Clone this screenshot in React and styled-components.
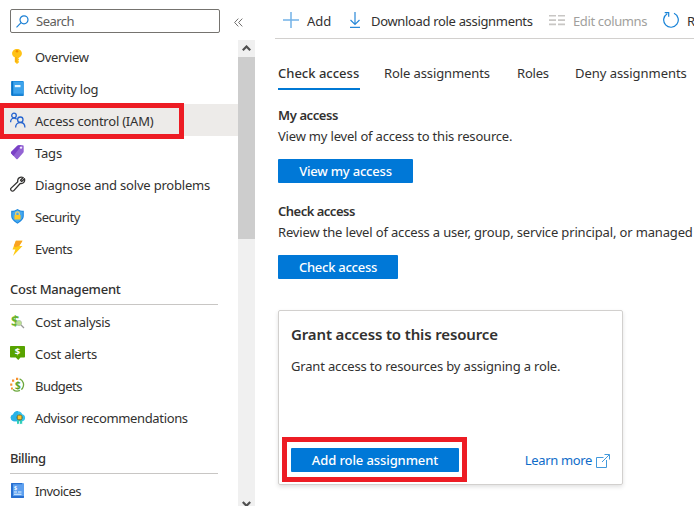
import React from "react";
import styled, { createGlobalStyle, css } from "styled-components";

const GlobalStyle = createGlobalStyle`
  * { box-sizing: border-box; }
  html, body { margin: 0; padding: 0; background: #fff; }
  body {
    width: 694px;
    height: 506px;
    overflow: hidden;
    font-family: "Noto Sans", "Open Sans", sans-serif;
    font-size: 13px;
    color: #323130;
  }
  h2, h3, p { margin: 0; }
`;

const Text = styled.span`
  white-space: nowrap;
  letter-spacing: ${(p) => p.$spacing || 0}px;
`;

const Page = styled.div`
  display: flex;
  width: 694px;
  height: 506px;
  overflow: hidden;
`;

const Sidebar = styled.aside`
  flex: none;
  width: 255px;
  height: 506px;
  display: flex;
  flex-direction: column;
`;

const SearchRow = styled.div`
  flex: none;
  height: 40px;
  padding: 9px 11px 0 10px;
  display: flex;
  align-items: flex-start;
  justify-content: space-between;
`;

const SearchBox = styled.div`
  width: 210px;
  height: 24px;
  border: 1px solid #75736f;
  border-radius: 2px;
  display: flex;
  align-items: center;
  gap: 7px;
  padding: 0 5px;
  color: #605e5c;
`;

const Collapse = styled.div`
  width: 10px;
  height: 26px;
  display: flex;
  align-items: center;
`;

const SidebarBody = styled.div`
  display: flex;
  flex: 1;
  min-height: 0;
`;

const Menu = styled.nav`
  width: 238px;
  overflow: hidden;
`;

const MenuRow = styled.div`
  position: relative;
  height: 32px;
  display: flex;
  align-items: center;
  gap: 9px;
  padding: 2px 0 0 10px;
  background: ${(p) => (p.$selected ? "#edebe9" : "transparent")};
  svg { flex: none; margin-top: -2px; }
`;

const MenuHeading = styled.h3`
  height: 41px;
  width: 208px;
  margin-left: 10px;
  padding-top: 15px;
  border-bottom: 1px solid #c8c6c4;
  font-size: 13px;
  line-height: 20px;
  font-weight: 550;
`;

const ScrollBar = styled.div`
  width: 17px;
  background: #f0f0f0;
  display: flex;
  flex-direction: column;
  justify-content: space-between;
  overflow: hidden;
`;

const ScrollThumb = styled.div`
  height: 182px;
  background: #cdcdcd;
`;

const ScrollButton = styled.div`
  height: ${(p) => p.$height}px;
  display: flex;
  justify-content: center;
  svg { flex: none; margin-top: ${(p) => p.$offset}px; }
`;

const Highlight = styled.div`
  position: absolute;
  pointer-events: none;
  border: 5px solid #ed1c24;
  ${(p) =>
    p.$kind === "menu"
      ? css`left: -1px; top: -1px; width: 185px; height: 36px;`
      : css`left: -9px; top: -11px; width: 185px; height: 45px;`}
`;

const Main = styled.main`
  flex: 1;
  min-width: 0;
  padding-left: 20px;
  overflow: hidden;
`;

const Toolbar = styled.div`
  height: 39px;
  border-bottom: 1px solid #d2d0ce;
  display: flex;
  align-items: center;
  padding: 4px 0 0 8px;
  overflow: hidden;
`;

const Command = styled.div`
  flex: none;
  width: ${(p) => p.$width}px;
  display: flex;
  align-items: center;
  gap: ${(p) => p.$gap}px;
  color: ${(p) => (p.$disabled ? "#a19f9d" : "#323130")};
  svg { flex: none; margin-top: -2px; }
`;

const Content = styled.div`
  padding-left: 3px;
`;

const Tabs = styled.div`
  display: flex;
  height: 51px;
  padding-top: 24px;
  overflow: hidden;
`;

const Tab = styled.div`
  flex: none;
  height: 27px;
  line-height: 20px;
  margin-right: ${(p) => p.$after}px;
  width: ${(p) => p.$width}px;
  border-bottom: 2px solid ${(p) => (p.$active ? "#0078d4" : "transparent")};
  font-weight: ${(p) => (p.$active ? 500 : 400)};
`;

const Section = styled.section`
  height: 96px;
  padding-top: 15px;
`;

const SectionTitle = styled.h2`
  font-size: 13px;
  font-weight: 650;
  line-height: 20px;
`;

const Paragraph = styled.p`
  line-height: 20px;
  margin-top: 1px;
  white-space: nowrap;
`;

const PrimaryButton = styled.div`
  width: ${(p) => p.$width}px;
  height: 24px;
  border-radius: 1px;
  background: #0078d7;
  color: #fff;
  font-weight: 500;
  display: flex;
  align-items: center;
  justify-content: center;
`;

const SectionAction = styled.div`
  margin-top: 13px;
`;

const Card = styled.section`
  width: 345px;
  height: 175px;
  margin-top: 28px;
  border: 1px solid #d2d0ce;
  border-radius: 2px;
  box-shadow: 0 2px 4px rgba(0, 0, 0, 0.12);
  padding: 12px 12px 12px;
  display: flex;
  flex-direction: column;
`;

const CardTitle = styled.h2`
  font-size: 15px;
  line-height: 22px;
  font-weight: 600;
`;

const CardText = styled.p`
  margin-top: 11px;
  line-height: 20px;
`;

const CardFooter = styled.div`
  margin-top: auto;
  display: flex;
  align-items: center;
  justify-content: space-between;
`;

const HighlightAnchor = styled.div`
  position: relative;
`;

const Link = styled.div`
  display: flex;
  align-items: center;
  gap: 4px;
  color: #0f6cc9;
  svg { margin-top: 2px; }
`;

const SearchIcon = () => (
  <svg width="13" height="13" viewBox="0 0 13 13" fill="none" stroke="#1a7fd4" strokeWidth="1.2">
    <circle cx="8" cy="4.8" r="4" />
    <path d="M5.1 7.7 0.5 12.3" />
  </svg>
);

const CollapseIcon = () => (
  <svg width="9" height="9" viewBox="0 0 9 9" fill="none" stroke="#605e5c" strokeWidth="0.9">
    <path d="M4.3.6.6 4.500l3.700 3.900M8.300.6 4.600 4.500l3.700 3.900" />
  </svg>
);

const Chevron = ({ down }) => (
  <svg width="9" height="7" viewBox="0 0 9 7" fill="none" stroke="#505050" strokeWidth="2.2">
    <path d={down ? "M.8 1 4.5 4.8 8.2 1" : "M.8 5.2 4.5 1.5l3.7 3.7"} />
  </svg>
);

const Icon = ({ children }) => (
  <svg width="16" height="16" viewBox="0 0 16 16" fill="none">
    {children}
  </svg>
);

const KeyIcon = () => (
  <Icon>
    <path d="M7 1C4.200 1 2.100 2.900 2.100 5.400c0 1.700 1 3.100 2.700 3.900V14L7 15.900l2.200-2-1-1.200 1-1.200-1-1.100 1-.900c1.700-.9 2.700-2.400 2.700-4.100C11.900 2.900 9.800 1 7 1Z" fill="#ffc216" />
    <circle cx="7" cy="3.300" r="1.300" fill="#f08c00" />
    <path d="M6 9v5" stroke="#f3a20a" />
  </Icon>
);

const LogIcon = () => (
  <Icon>
    <rect x="1.300" y="1" width="12.500" height="14.700" rx="1" fill="#208ee0" />
    <path d="M3.500 2h9.700v11.500H3.500z" fill="#3da3ec" />
    <path d="M1.300 2v12.700c0 .6.4 1 1 1h10.500c.6 0 1-.4 1-1H3V1h-.7c-.6 0-1 .4-1 1Z" fill="#0874c7" />
    <path d="M4.800 5h5.700v2.200H4.800z" fill="#e9f7ff" />
  </Icon>
);

const PeopleIcon = () => (
  <Icon>
    <g stroke="#2564cf" strokeWidth="1.300">
      <circle cx="4" cy="3.500" r="2.300" />
      <circle cx="10.300" cy="7.700" r="2.700" />
      <path d="M.6 10.200c0-2.300 1.200-4 3.400-4 1.200 0 2 .4 2.700 1.100M5.600 15.600c0-2.900 1.900-5.100 4.700-5.100s4.600 2.200 4.600 5.100" />
    </g>
  </Icon>
);

const TagIcon = () => (
  <Icon>
    <path d="m1.300 7.700 6-5.900c.4-.4.8-.6 1.400-.6l4 .100c.6 0 1 .5 1 1v5.200c0 .5-.2.900-.5 1.200L7.700 15c-.4.400-1 .4-1.400 0l-5-5.400c-.5-.5-.5-1.400 0-1.900Z" fill="#9363d3" />
    <path d="m1.300 7.700 6-5.900c.4-.4.8-.6 1.400-.6l3 .100-8.300 10.600-2.100-2.300c-.5-.5-.5-1.400 0-1.900Z" fill="#7a41c6" />
    <circle cx="11" cy="3.600" r="1.200" fill="#f4eaff" />
  </Icon>
);

const WrenchIcon = () => (
  <Icon>
    <path d="M13.200 1.500 10.500 4.300l1.200 1.200 2.800-2.700c.7 2.600-1.100 5.300-4.300 4.700l-6.400 7.100c-1.500 1.700-4.300-.8-2.700-2.500l6.700-6.300c-.8-3.300 2.400-5.700 5.400-4.300Z" stroke="#323130" strokeWidth="1.300" strokeLinejoin="round" />
  </Icon>
);

const SecurityIcon = () => (
  <Icon>
    <path d="M7.500.9c1.700 1.400 3.900 1.800 6.300 1.900v5.300c0 3.600-3.600 6.100-6.300 7.700-2.700-1.600-6.300-4.100-6.300-7.700V2.800C3.600 2.700 5.800 2.300 7.500.9Z" fill="#1a86de" />
    <path d="M7.500 2c1.500 1.200 3.300 1.600 5.200 1.800v4.300c0 3-3 5.100-5.200 6.400-2.200-1.300-5.200-3.400-5.200-6.400V3.800c2-.1 3.700-.6 5.200-1.800Z" fill="#46a8ee" />
    <path d="M5.700 7.200V5.600c0-2.300 3.600-2.300 3.600 0v1.600" stroke="#f5d468" strokeWidth="1.200" />
    <rect x="4.500" y="6.900" width="6" height="4.600" rx=".5" fill="#ffc928" />
  </Icon>
);

const EventsIcon = () => (
  <Icon>
    <path d="M5.900.800h6.600L9.200 6h3.300L3 15.900l2.400-6.400H2.500L5.900.800Z" fill="#fecb16" />
    <path d="M5.900.800h6.600L9.200 6 5 7.200 3.800 6.100Z" fill="#faa221" />
  </Icon>
);

const Dollar = ({ x, y, size, color }) => (
  <text
    x={x}
    y={y}
    fontSize={size}
    fontWeight="700"
    textAnchor="middle"
    fontFamily="Noto Sans, sans-serif"
    fill={color}
  >
    $
  </text>
);

const CostIcon = () => (
  <Icon>
    <Dollar x="5.200" y="13.200" size="15" color="#68b42e" />
    <circle cx="9" cy="10" r="2.600" fill="#b9e38e" stroke="#b0bfa6" strokeWidth=".8" />
    <path d="m11 12 3 3" stroke="#999" strokeWidth="1.200" />
  </Icon>
);

const AlertIcon = () => (
  <Icon>
    <path d="M1 1h13c.6 0 1 .4 1 1v9.500c0 .6-.4 1-1 1h-3.500L8.200 15l-2.400-2.500H1c-.6 0-1-.4-1-1V2c0-.6.4-1 1-1Z" fill="#57a300" />
    <Dollar x="7.500" y="10.300" size="9.500" color="#fff" />
  </Icon>
);

const BudgetIcon = () => (
  <Icon>
    <path d="M9.600 1.900A6.300 6.300 0 1 1 3 12.400" stroke="#6ca83d" strokeWidth="1.300" strokeDasharray="13 1.500" />
    <Dollar x="7.900" y="12" size="10" color="#5ea226" />
    <path d="M6 .7h2.200v2.200H6zM2 2.500h2.200v2.200H2zM.2 6.600h2.100v2.100H.2zM1 10.600h1.900v1.900H1z" fill="#f7912e" />
  </Icon>
);

const AdvisorIcon = () => (
  <Icon>
    <path d="M3.600 12.200a3.500 3.500 0 0 1-.4-6.800A4.900 4.900 0 0 1 12.300 5.200a3.600 3.600 0 0 1 .1 7Z" fill="#35c3ee" />
    <path d="M3.600 12.200a3.500 3.500 0 0 1-.4-6.800A4.900 4.900 0 0 1 8 1.900v10.300Z" fill="#2ab2e6" />
    <path d="M7 11h2.200v4.300l-1.100-.8-1.100.8zM10 11h2.200v4.300l-1.100-.8-1.100.8z" fill="#32cfba" />
    <circle cx="9.600" cy="8.400" r="3" fill="#5f6a3a" />
    <path d="M7.700 6.500h3.800v3.800H7.700z" fill="#ffc62b" />
  </Icon>
);

const InvoiceIcon = () => (
  <Icon>
    <rect x="1" y="1" width="13" height="15" rx="1" fill="#5ea0ef" />
    <path d="M1 2c0-.6.400-1 1-1h10v1.300H3V14h11v1c0 .6-.4 1-1 1H2c-.6 0-1-.4-1-1Z" fill="#286fd0" />
    <Dollar x="5.500" y="8" size="5.500" color="#fff" />
    <path d="M4 9.500h3v1H4zm4 0h3.500v1H8zM4 11.700h7.500v1H4z" fill="#e5f3ff" />
  </Icon>
);

const AddIcon = () => (
  <svg width="16" height="16" viewBox="0 0 16 16" stroke="#73b3e7" strokeWidth="1.500">
    <path d="M8 0v16M0 8h16" />
  </svg>
);

const DownloadIcon = () => (
  <svg width="10" height="16" viewBox="0 0 10 16" fill="none" stroke="#2888d8" strokeWidth="1.200">
    <path d="M5 0v12M.5 8 5 12.400 9.500 8M0 15.300h10" />
  </svg>
);

const ColumnsIcon = () => (
  <svg width="16" height="12" viewBox="0 0 16 12" fill="#c8c6c4">
    <path d="M0 1h7v1.600H0zm9 0h7v1.600H9zM0 5.300h7v1.600H0zm9 0h7v1.600H9zM0 9.600h7v1.600H0zm9 0h7v1.600H9z" />
  </svg>
);

const RefreshIcon = () => (
  <svg width="16" height="16" viewBox="0 0 16 16" fill="none" stroke="#1883d7" strokeWidth="1.200">
    <path d="M11 1.300A7.300 7.300 0 1 1 4.200 1.700M1.700.6h4v4.200" />
  </svg>
);

const ExternalIcon = () => (
  <svg width="14" height="14" viewBox="0 0 14 14" fill="none" stroke="#4299dc" strokeWidth="1">
    <path d="M7.500 3.500h-7v10h10V6M8.500.5h5v5M13.300.7 6 8" />
  </svg>
);

const resourceItems = [
  [KeyIcon, "Overview", -0.4],
  [LogIcon, "Activity log", -0.27],
  [PeopleIcon, "Access control (IAM)", -0.22, true],
  [TagIcon, "Tags", -0.2],
  [WrenchIcon, "Diagnose and solve problems", -0.2],
  [SecurityIcon, "Security", -0.5],
  [EventsIcon, "Events", -0.5],
];

const costItems = [
  [CostIcon, "Cost analysis", -0.27],
  [AlertIcon, "Cost alerts", -0.25],
  [BudgetIcon, "Budgets", -0.55],
  [AdvisorIcon, "Advisor recommendations", -0.35],
];

const billingItems = [[InvoiceIcon, "Invoices", -0.5]];

const MenuItems = ({ items }) =>
  items.map(([Glyph, label, spacing, selected]) => (
    <MenuRow key={label} $selected={selected}>
      <Glyph />
      <Text $spacing={spacing}>{label}</Text>
      {selected && <Highlight $kind="menu" />}
    </MenuRow>
  ));

export default function App() {
  return (
    <Page>
      <GlobalStyle />
      <Sidebar>
        <SearchRow>
          <SearchBox>
            <SearchIcon />
            <Text $spacing={-0.5}>Search</Text>
          </SearchBox>
          <Collapse>
            <CollapseIcon />
          </Collapse>
        </SearchRow>
        <SidebarBody>
          <Menu>
            <MenuItems items={resourceItems} />
            <MenuHeading>
              <Text $spacing={-0.25}>Cost Management</Text>
            </MenuHeading>
            <MenuItems items={costItems} />
            <MenuHeading>
              <Text $spacing={-0.45}>Billing</Text>
            </MenuHeading>
            <MenuItems items={billingItems} />
          </Menu>
          <ScrollBar>
            <div>
              <ScrollButton $height={17} $offset={5}>
                <Chevron />
              </ScrollButton>
              <ScrollThumb />
            </div>
            <ScrollButton $height={5} $offset={0}>
              <Chevron down />
            </ScrollButton>
          </ScrollBar>
        </SidebarBody>
      </Sidebar>
      <Main>
        <Toolbar>
          <Command $width={67} $gap={8}>
            <AddIcon />
            <Text>Add</Text>
          </Command>
          <Command $width={199} $gap={11}>
            <DownloadIcon />
            <Text $spacing={-0.33}>Download role assignments</Text>
          </Command>
          <Command $width={114} $gap={8} $disabled>
            <ColumnsIcon />
            <Text $spacing={-0.37}>Edit columns</Text>
          </Command>
          <Command $width={80} $gap={8}>
            <RefreshIcon />
            <Text>Refresh</Text>
          </Command>
        </Toolbar>
        <Content>
          <Tabs>
            <Tab $width={82} $after={24} $active>
              <Text>Check access</Text>
            </Tab>
            <Tab $width={106} $after={27}>
              <Text $spacing={-0.1}>Role assignments</Text>
            </Tab>
            <Tab $width={32} $after={26}>
              <Text $spacing={-0.2}>Roles</Text>
            </Tab>
            <Tab $width={112} $after={0}>
              <Text $spacing={-0.04}>Deny assignments</Text>
            </Tab>
          </Tabs>
          <Section>
            <SectionTitle>
              <Text $spacing={-0.4}>My access</Text>
            </SectionTitle>
            <Paragraph>
              <Text $spacing={-0.19}>View my level of access to this resource.</Text>
            </Paragraph>
            <SectionAction>
              <PrimaryButton $width={135}>
                <Text $spacing={-0.2}>View my access</Text>
              </PrimaryButton>
            </SectionAction>
          </Section>
          <Section>
            <SectionTitle>
              <Text $spacing={-0.5}>Check access</Text>
            </SectionTitle>
            <Paragraph>
              <Text $spacing={-0.155}>
                Review the level of access a user, group, service principal, or managed
              </Text>
            </Paragraph>
            <SectionAction>
              <PrimaryButton $width={120}>
                <Text $spacing={-0.25}>Check access</Text>
              </PrimaryButton>
            </SectionAction>
          </Section>
          <Card>
            <CardTitle>
              <Text $spacing={-0.14}>Grant access to this resource</Text>
            </CardTitle>
            <CardText>
              <Text $spacing={-0.17}>Grant access to resources by assigning a role.</Text>
            </CardText>
            <CardFooter>
              <HighlightAnchor>
                <PrimaryButton $width={168}>
                  <Text $spacing={-0.1}>Add role assignment</Text>
                </PrimaryButton>
                <Highlight $kind="button" />
              </HighlightAnchor>
              <Link>
                <Text $spacing={-0.35}>Learn more</Text>
                <ExternalIcon />
              </Link>
            </CardFooter>
          </Card>
        </Content>
      </Main>
    </Page>
  );
}
